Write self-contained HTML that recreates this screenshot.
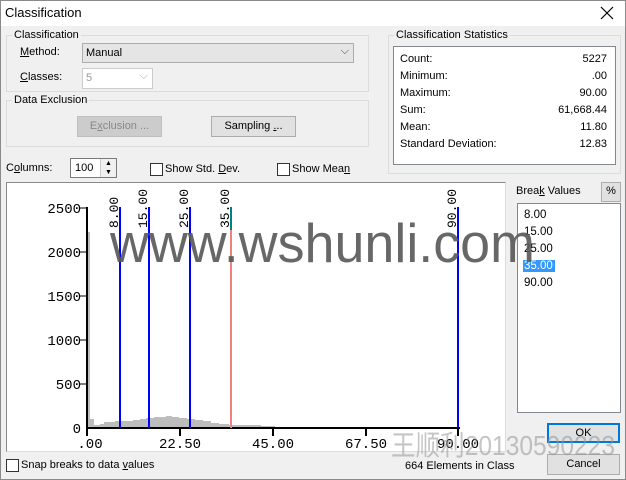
<!DOCTYPE html>
<html><head><meta charset="utf-8"><style>
*{margin:0;padding:0;box-sizing:border-box}
body{width:626px;height:480px;overflow:hidden;background:#f0f0f0;font-family:"Liberation Sans","Noto Sans CJK SC",sans-serif;font-size:11px;color:#000;position:relative}
.a{position:absolute;white-space:nowrap}
.win{left:0;top:0;width:626px;height:480px;border:1px solid #8a8a8a}
.title{left:1px;top:1px;width:624px;height:25px;background:#fff}
.grp{border:1px solid #dcdcdc}
.lg{background:#f0f0f0;padding:0 2px}
.btn{border:1px solid #adadad;background:#e1e1e1;text-align:center;line-height:18px}
.cb{width:13px;height:13px;border:1px solid #333;background:#fff}
u{text-decoration:underline}
</style></head><body>
<div class="a win"></div>
<div class="a title"></div>
<div class="a" style="left:5px;top:5px;font-size:13px">Classification</div>
<svg class="a" style="left:600px;top:6px" width="14" height="14"><path d="M1 1L13 13M13 1L1 13" stroke="#000" stroke-width="1.2"/></svg>

<div class="a grp" style="left:6px;top:35px;width:363px;height:57px"></div>
<div class="a lg" style="left:12px;top:29px">Classification</div>
<div class="a" style="left:20px;top:46px"><u>M</u>ethod:</div>
<div class="a" style="left:82px;top:43px;width:272px;height:20px;background:#e5e5e5;border:1px solid #adadad;padding:3px 3px">Manual<span style="position:absolute;right:4px;top:1px;color:#444">⌵</span></div>
<div class="a" style="left:20px;top:71px"><u>C</u>lasses:</div>
<div class="a" style="left:82px;top:68px;width:71px;height:21px;background:#fff;border:1px solid #ccc;padding:3px 3px;color:#999">5<span style="position:absolute;right:4px;top:1px;color:#aaa">⌵</span></div>

<div class="a grp" style="left:6px;top:100px;width:363px;height:47px"></div>
<div class="a lg" style="left:12px;top:94px">Data Exclusion</div>
<div class="a btn" style="left:77px;top:116px;width:85px;height:21px;background:#ccc;border-color:#bfbfbf;color:#888">E<u>x</u>clusion ...</div>
<div class="a btn" style="left:211px;top:116px;width:85px;height:21px">Sampling <u>.</u>..</div>

<div class="a" style="left:6px;top:162px">C<u>o</u>lumns:</div>
<div class="a" style="left:70px;top:158px;width:47px;height:20px;background:#fff;border:1px solid #7a7a7a;padding:3px 4px">100</div>
<div class="a" style="left:100px;top:159px;width:16px;height:18px;background:#f0f0f0;border-left:1px solid #ccc;font-size:7px;line-height:9px;text-align:center">▲<br>▼</div>
<div class="a cb" style="left:150px;top:163px"></div>
<div class="a" style="left:165px;top:163px">Show Std. <u>D</u>ev.</div>
<div class="a cb" style="left:277px;top:163px"></div>
<div class="a" style="left:292px;top:163px">Show Mea<u>n</u></div>

<div class="a grp" style="left:388px;top:35px;width:233px;height:139px"></div>
<div class="a lg" style="left:394px;top:29px">Classification Statistics</div>
<div class="a" style="left:393px;top:46px;width:223px;height:119px;background:#fff;border:1px solid #828790"></div>
<div class="a" style="left:400px;top:51px;line-height:17px">Count:<br>Minimum:<br>Maximum:<br>Sum:<br>Mean:<br>Standard Deviation:</div>
<div class="a" style="left:500px;top:51px;width:107px;text-align:right;line-height:17px">5227<br>.00<br>90.00<br>61,668.44<br>11.80<br>12.83</div>

<div class="a" style="left:6px;top:182px;width:500px;height:270px;background:#fff;border:1px solid #8a8a8a;border-right-color:#ddd;border-bottom-color:#ddd"></div>
<svg class="a" style="left:0;top:0" width="626" height="480">
<g fill="#bdbdbd">
<rect x="88" y="232" width="2" height="196"/>
<rect x="90" y="419" width="4" height="8"/><rect x="94" y="425" width="6" height="2"/><rect x="100" y="424" width="4" height="3"/><rect x="104" y="422" width="5" height="5"/><rect x="109" y="422" width="6" height="5"/><rect x="115" y="421" width="10" height="6"/><rect x="125" y="421" width="8" height="6"/><rect x="133" y="420" width="7" height="7"/><rect x="140" y="419" width="6" height="8"/><rect x="146" y="418" width="8" height="9"/><rect x="154" y="417" width="6" height="10"/><rect x="160" y="417" width="6" height="10"/><rect x="166" y="416" width="6" height="11"/><rect x="172" y="417" width="7" height="10"/><rect x="179" y="418" width="8" height="9"/><rect x="187" y="419" width="8" height="8"/><rect x="195" y="420" width="8" height="7"/><rect x="203" y="421" width="8" height="6"/><rect x="211" y="423" width="8" height="4"/><rect x="219" y="424" width="10" height="3"/><rect x="229" y="425" width="12" height="2"/><rect x="241" y="425" width="20" height="2"/><rect x="261" y="426" width="14" height="1"/>
</g>
<g stroke="#000" stroke-width="2"><line x1="87" y1="207" x2="87" y2="436"/><line x1="86" y1="428" x2="460" y2="428"/>
<line x1="180" y1="428" x2="180" y2="436"/><line x1="273" y1="428" x2="273" y2="436"/><line x1="366" y1="428" x2="366" y2="436"/><line x1="458" y1="428" x2="458" y2="436"/></g>
<g stroke="#000" stroke-width="1"><line x1="80" y1="208" x2="87" y2="208"/><line x1="80" y1="252" x2="87" y2="252"/><line x1="80" y1="296" x2="87" y2="296"/><line x1="80" y1="340" x2="87" y2="340"/><line x1="80" y1="384" x2="87" y2="384"/></g>
<g font-family="Liberation Mono,monospace" font-size="14" text-anchor="end">
<text x="81" y="213">2500</text><text x="81" y="257">2000</text><text x="81" y="301">1500</text><text x="81" y="345">1000</text><text x="81" y="389">500</text><text x="81" y="433">0</text></g>
<g font-family="Liberation Mono,monospace" font-size="14" text-anchor="middle">
<text x="90" y="448">.00</text><text x="180" y="448">22.50</text><text x="273" y="448">45.00</text><text x="366" y="448">67.50</text><text x="458" y="448">90.00</text></g>
<g stroke="#0000ff" stroke-width="2"><line x1="120" y1="207" x2="120" y2="428"/><line x1="149" y1="207" x2="149" y2="428"/><line x1="190" y1="207" x2="190" y2="428"/><line x1="458" y1="207" x2="458" y2="428"/></g>
<line x1="231" y1="207" x2="231" y2="428" stroke="#f08080" stroke-width="2"/>
<line x1="231" y1="207" x2="231" y2="230" stroke="#008080" stroke-width="2"/>
<g font-family="Liberation Mono,monospace" font-size="13">
<text transform="translate(118,228) rotate(-90)">8.00</text><text transform="translate(147,228) rotate(-90)">15.00</text><text transform="translate(188,228) rotate(-90)">25.00</text><text transform="translate(229,228) rotate(-90)">35.00</text><text transform="translate(456,228) rotate(-90)">90.00</text></g>
</svg>

<div class="a" style="left:516px;top:185px">Brea<u>k</u> Values</div>
<div class="a btn" style="left:601px;top:182px;width:20px;height:20px;line-height:17px">%</div>
<div class="a" style="left:517px;top:203px;width:104px;height:210px;background:#fff;border:1px solid #828790"></div>
<div class="a" style="left:524px;top:207px;line-height:17px;font-size:11.5px">8.00<br>15.00<br>25.00<br><span style="background:#3399ff;color:#fff;margin-left:-1px;padding:0 2px 0 1px">35.00</span><br>90.00</div>
<div class="a btn" style="left:547px;top:423px;width:73px;height:20px;border:2px solid #0078d7;line-height:16px">OK</div>
<div class="a btn" style="left:547px;top:454px;width:73px;height:21px">Cancel</div>

<div class="a cb" style="left:6px;top:459px"></div>
<div class="a" style="left:21px;top:459px">Snap breaks to data <u>v</u>alues</div>
<div class="a" style="left:405px;top:460px">664 Elements in Class</div>

<svg class="a" style="left:0;top:0" width="626" height="480">
<text x="110" y="262" font-family="Liberation Sans,sans-serif" font-size="55" fill="rgba(90,90,90,.92)" textLength="425" lengthAdjust="spacingAndGlyphs">www.wshunli.com</text>
<text x="391" y="455" font-family="Liberation Sans,Noto Sans CJK SC,sans-serif" font-size="28" fill="rgba(150,150,150,.55)" textLength="224" lengthAdjust="spacingAndGlyphs">王顺利20130590223</text>
</svg>
</body></html>
